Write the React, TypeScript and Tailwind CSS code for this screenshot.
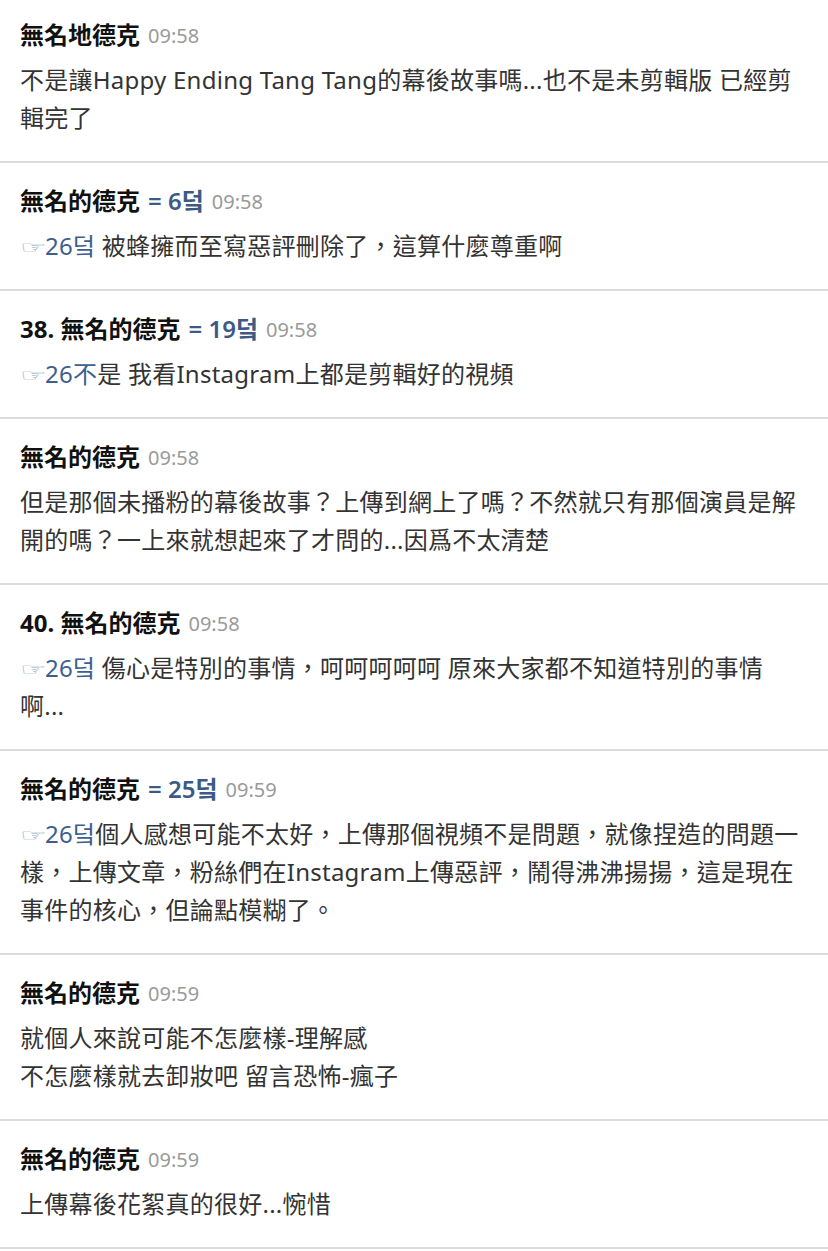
import type { ReactNode } from "react"

type Comment = {
  num?: string
  name: string
  ref?: string
  time: string
  body: ReactNode
}

// pointing hand shown before reply numbers, stretched wide like the app renders it
const Hand = () => (
  <span className="inline-block w-[25px] origin-left scale-x-[1.5] scale-y-[0.85] align-[1px] font-['DejaVu_Sans'] text-[20px] leading-none text-[#90a5c2]">☞</span>
)

const Blue = ({ children }: { children: ReactNode }) => (
  <span className="text-[#3d5f8f]">{children}</span>
)

const comments: Comment[] = [
  {
    name: "無名地德克",
    time: "09:58",
    body: "不是讓Happy Ending Tang Tang的幕後故事嗎...也不是未剪輯版 已經剪輯完了",
  },
  {
    name: "無名的德克",
    ref: "= 6덬",
    time: "09:58",
    body: (
      <>
        <Hand />
        <Blue>26덬</Blue> 被蜂擁而至寫惡評刪除了，這算什麼尊重啊
      </>
    ),
  },
  {
    num: "38.",
    name: "無名的德克",
    ref: "= 19덬",
    time: "09:58",
    body: (
      <>
        <Hand />
        <Blue>26不</Blue>是 我看Instagram上都是剪輯好的視頻
      </>
    ),
  },
  {
    name: "無名的德克",
    time: "09:58",
    body: "但是那個未播粉的幕後故事？上傳到網上了嗎？不然就只有那個演員是解開的嗎？一上來就想起來了才問的...因爲不太清楚",
  },
  {
    num: "40.",
    name: "無名的德克",
    time: "09:58",
    body: (
      <>
        <Hand />
        <Blue>26덬</Blue> 傷心是特別的事情，呵呵呵呵呵 原來大家都不知道特別的事情啊...
      </>
    ),
  },
  {
    name: "無名的德克",
    ref: "= 25덬",
    time: "09:59",
    body: (
      <>
        <Hand />
        <Blue>26덬</Blue>個人感想可能不太好，上傳那個視頻不是問題，就像捏造的問題一樣，上傳文章，粉絲們在Instagram上傳惡評，鬧得沸沸揚揚，這是現在事件的核心，但論點模糊了。
      </>
    ),
  },
  {
    name: "無名的德克",
    time: "09:59",
    body: (
      <>
        就個人來說可能不怎麼樣-理解感
        <br />
        不怎麼樣就去卸妝吧 留言恐怖-瘋子
      </>
    ),
  },
  {
    name: "無名的德克",
    time: "09:59",
    body: "上傳幕後花絮真的很好...惋惜",
  },
]

export default function App() {
  return (
    <div className="min-h-[1251px] overflow-hidden bg-white font-['Noto_Sans','Noto_Sans_CJK_TC','Noto_Sans_CJK_KR',sans-serif]">
      <div className="-mt-[3px]">
        {comments.map((c, i) => (
          <div key={i} className="border-b-2 border-[#dcdcdc] pb-[24px] pl-[20px] pr-[26px] pt-[22px]">
            <div className="flex h-[32px] items-center gap-[8px] overflow-visible whitespace-nowrap">
              <span className="text-[24px] font-bold leading-[32px] text-[#111]">
                {c.num ? c.num + " " : ""}
                {c.name}
              </span>
              {c.ref && (
                <span className="text-[24px] font-semibold leading-[32px] text-[#3d5a85]">{c.ref}</span>
              )}
              <span className="pt-[2px] text-[20px] leading-[32px] text-[#9a9a9a]">{c.time}</span>
            </div>
            <div className="mt-[10px] text-[24px] leading-[38px] tracking-[0.25px] text-[#333]">
              {c.body}
            </div>
          </div>
        ))}
      </div>
    </div>
  )
}
